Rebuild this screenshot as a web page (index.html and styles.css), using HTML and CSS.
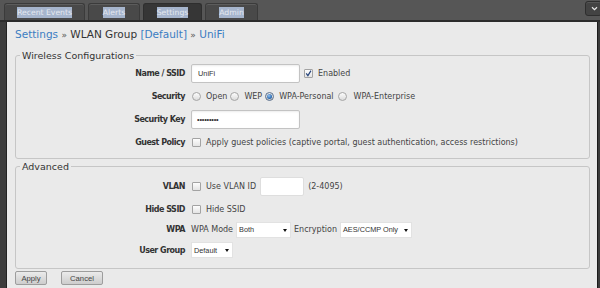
FILE: index.html
```html
<!DOCTYPE html>
<html lang="en">
<head>
<meta charset="utf-8">
<title>UniFi - WLAN Group Settings</title>
<link rel="stylesheet" href="styles.css">
</head>
<body>
<div class="app">
  <header class="topbar">
    <nav class="tabs">
      <a class="tab t1"><span class="sel">Recent Events</span></a>
      <a class="tab t2"><span class="sel">Alerts</span></a>
      <a class="tab t3 active"><span class="sel">Settings</span></a>
      <a class="tab t4"><span class="sel">Admin</span></a>
    </nav>
    <button class="menu-btn" aria-label="menu">
      <svg width="7" height="5" viewBox="0 0 7 5"><path d="M1 1.2 3.5 3.6 6 1.2" fill="none" stroke="#e8e8e8" stroke-width="1.2"/></svg>
    </button>
  </header>
  <div class="body">
    <main class="panel">
      <h1 class="crumbs"><span class="link">Settings</span> <span class="sep">»</span> WLAN Group <span class="link">[Default]</span> <span class="sep">»</span> <span class="link">UniFi</span></h1>

      <fieldset class="group g1">
        <legend>Wireless Configurations</legend>
        <div class="form">
          <div class="lbl">Name / SSID</div>
          <div class="ctl">
            <input class="txt" type="text" value="UniFi">
            <span class="check on"><svg viewBox="0 0 9 9" width="9" height="9"><path d="M2.2 4.4 3.9 6.6 7 1.6" fill="none" stroke="#27457c" stroke-width="1.2"/></svg></span>
            <span class="opt">Enabled</span>
          </div>

          <div class="lbl">Security</div>
          <div class="ctl">
            <span class="radio"></span><span class="opt ro">Open</span>
            <span class="radio"></span><span class="opt ro">WEP</span>
            <span class="radio on"></span><span class="opt ro">WPA-Personal</span>
            <span class="radio r4"></span><span class="opt">WPA-Enterprise</span>
          </div>

          <div class="lbl">Security Key</div>
          <div class="ctl">
            <input class="txt pw" type="password" value="secretkey">
          </div>

          <div class="lbl">Guest Policy</div>
          <div class="ctl">
            <span class="check first"></span>
            <span class="opt">Apply guest policies (captive portal, guest authentication, access restrictions)</span>
          </div>
        </div>
      </fieldset>

      <fieldset class="group g2">
        <legend>Advanced</legend>
        <div class="form">
          <div class="lbl">VLAN</div>
          <div class="ctl">
            <span class="check first"></span>
            <span class="opt">Use VLAN ID</span>
            <input class="txt vlan" type="text" value="">
            <span class="opt hint">(2-4095)</span>
          </div>

          <div class="lbl">Hide SSID</div>
          <div class="ctl">
            <span class="check first"></span>
            <span class="opt">Hide SSID</span>
          </div>

          <div class="lbl">WPA</div>
          <div class="ctl">
            <span class="opt">WPA Mode</span>
            <span class="select s-mode">Both</span>
            <span class="opt">Encryption</span>
            <span class="select s-enc">AES/CCMP Only</span>
          </div>

          <div class="lbl">User Group</div>
          <div class="ctl">
            <span class="select s-user">Default</span>
          </div>
        </div>
      </fieldset>

      <div class="actions">
        <button class="btn b-apply">Apply</button>
        <button class="btn b-cancel">Cancel</button>
      </div>
    </main>
  </div>
</div>
</body>
</html>
```

FILE: styles.css
```css
* { box-sizing: border-box; }

html, body {
  margin: 0;
  height: 100%;
}

body {
  background: #3c3c3c;
  font-family: "DejaVu Sans", Verdana, sans-serif;
  font-size: 8px;
  color: #444;
  overflow: hidden;
}

.app {
  display: flex;
  flex-direction: column;
  height: 288px;
}

/* ---------- top bar ---------- */
.topbar {
  flex: none;
  height: 22px;
  display: flex;
  padding-left: 4px;
  background: #565656;
  border-bottom: 2px solid #2c2c2c;
}

.tabs {
  display: flex;
  align-items: flex-end;
  gap: 3px;
  height: 20px;
}

.tab {
  height: 17px;
  display: flex;
  align-items: center;
  justify-content: center;
  background: #494949;
  border: 1px solid #3b3b3b;
  border-bottom: none;
  border-radius: 3px 3px 0 0;
  box-shadow: inset 0 1px 0 #5c5c5c;
}

.tab.active {
  background: #363636;
  border-color: #2e2e2e;
  box-shadow: none;
}

.t1 { width: 81px; }
.t2 { width: 52px; }
.t3 { width: 59px; }
.t4 { width: 53px; }

.sel {
  font-size: 7.7px;
  line-height: 11px;
  background: #a6b5cd;
  color: #e4e8ef;
}

.menu-btn {
  margin-left: auto;
  margin-top: 1px;
  margin-right: -2px;
  width: 17px;
  height: 15px;
  padding: 0 0 0 1px;
  display: flex;
  align-items: center;
  justify-content: center;
  background: #434343;
  border: 1px solid #2e2e2e;
  border-radius: 3px;
  box-shadow: inset 0 1px 0 #555;
}

/* ---------- body / panel ---------- */
.body {
  flex: 1;
  display: flex;
  padding: 0 2px 0 6px;
  background: #3c3c3c;
}

.panel {
  flex: 1;
  background: #eaeaea;
  border-left: 1px solid #222;
  border-right: 1px solid #1c1c1c;
  padding: 4px 7px 0 8px;
}

.crumbs {
  margin: 0 0 6px;
  font-size: 10.5px;
  line-height: 16px;
  font-weight: normal;
  color: #333;
}

.crumbs .link { color: #3b7dc2; }
.crumbs .sep { color: #555; font-size: 9px; }

/* ---------- fieldsets ---------- */
.group {
  margin: 0;
  padding: 2px 0 3px;
  min-width: 0;
  border: 1px solid #c6c6c6;
  border-radius: 3px;
}

.group legend {
  margin-left: 4px;
  padding: 0 2px;
  font-size: 9.5px;
  line-height: 13px;
  color: #333;
}

.g2 {
  margin-top: 1px;
  padding: 4px 0 5px;
}

.form {
  display: grid;
  grid-template-columns: 169px 1fr;
  column-gap: 6px;
}

.g1 .form { grid-template-rows: 19px 27px 19px 26px; }
.g2 .form { grid-template-rows: 19px 26px 15px 26px; }

.lbl {
  align-self: center;
  text-align: right;
  font-weight: bold;
  color: #333;
  letter-spacing: -0.5px;
}

.ctl {
  display: flex;
  align-items: center;
  white-space: nowrap;
}

.opt { color: #444; }
.ro { margin-right: 3px; }

/* text inputs */
.txt {
  width: 109px;
  height: 19px;
  margin: 0;
  padding: 0 0 0 6px;
  border: 1px solid #c3c3c3;
  border-radius: 2px;
  background: #fff;
  box-shadow: inset 0 1px 2px rgba(0, 0, 0, 0.08);
  font-family: "Liberation Sans", Arial, sans-serif;
  font-size: 7.4px;
  color: #333;
  outline: none;
}

.pw {
  padding-left: 5px;
  letter-spacing: -0.2px;
}

.vlan {
  width: 44px;
  margin: 0 4px 0 4px;
  border-color: #dedede;
  box-shadow: none;
}

/* checkboxes */
.check {
  flex: none;
  width: 9px;
  height: 9px;
  margin: 0 5px 0 4px;
  border: 1px solid #a3a3a3;
  border-radius: 1px;
  background: linear-gradient(#fdfdfd, #e4e4e4);
  display: flex;
}

.check svg { display: block; margin: -1px; }
.check.first { margin-left: 1px; }

/* radios */
.radio {
  flex: none;
  width: 9px;
  height: 9px;
  margin-right: 5px;
  border: 1px solid #a5a5a5;
  border-radius: 50%;
  background: linear-gradient(#fcfcfc, #dcdcdc);
  display: flex;
  align-items: center;
  justify-content: center;
}

.radio:first-child { margin-left: 1px; }
.radio.r4 { margin-left: 1px; margin-right: 7px; }

.radio.on {
  border-color: #5a6f8c;
  background: linear-gradient(#ececec, #c9c9c9);
}

.radio.on::after {
  content: "";
  width: 5px;
  height: 5px;
  border-radius: 50%;
  background: radial-gradient(circle at 40% 35%, #9cc4ee 0, #2e6fb7 60%, #1d4f8c 100%);
}

/* selects */
.select {
  position: relative;
  height: 14px;
  display: inline-flex;
  align-items: center;
  padding-left: 2px;
  background: #fff;
  box-shadow: 0 0 0 1px #e2e2e2;
  font-family: "Liberation Sans", Arial, sans-serif;
  font-size: 7.3px;
  color: #333;
}

.select::after {
  content: "";
  position: absolute;
  right: 3px;
  top: 6px;
  border-left: 2.5px solid transparent;
  border-right: 2.5px solid transparent;
  border-top: 3px solid #111;
}

.s-mode { width: 53px; margin: 0 4px 0 4px; }
.s-enc { width: 70px; margin-left: 4px; }
.s-user { width: 40px; margin-left: 1px; }

/* buttons */
.actions {
  display: flex;
  gap: 14px;
  margin-top: 2px;
}

.btn {
  height: 14px;
  padding: 0;
  border: 1px solid #9d9d9d;
  border-radius: 2px;
  background: linear-gradient(#ebebeb, #cdcdcd);
  font-family: "Liberation Sans", Arial, sans-serif;
  font-size: 7.7px;
  color: #444;
}

.b-apply { width: 32px; }
.b-cancel { width: 42px; }
```
